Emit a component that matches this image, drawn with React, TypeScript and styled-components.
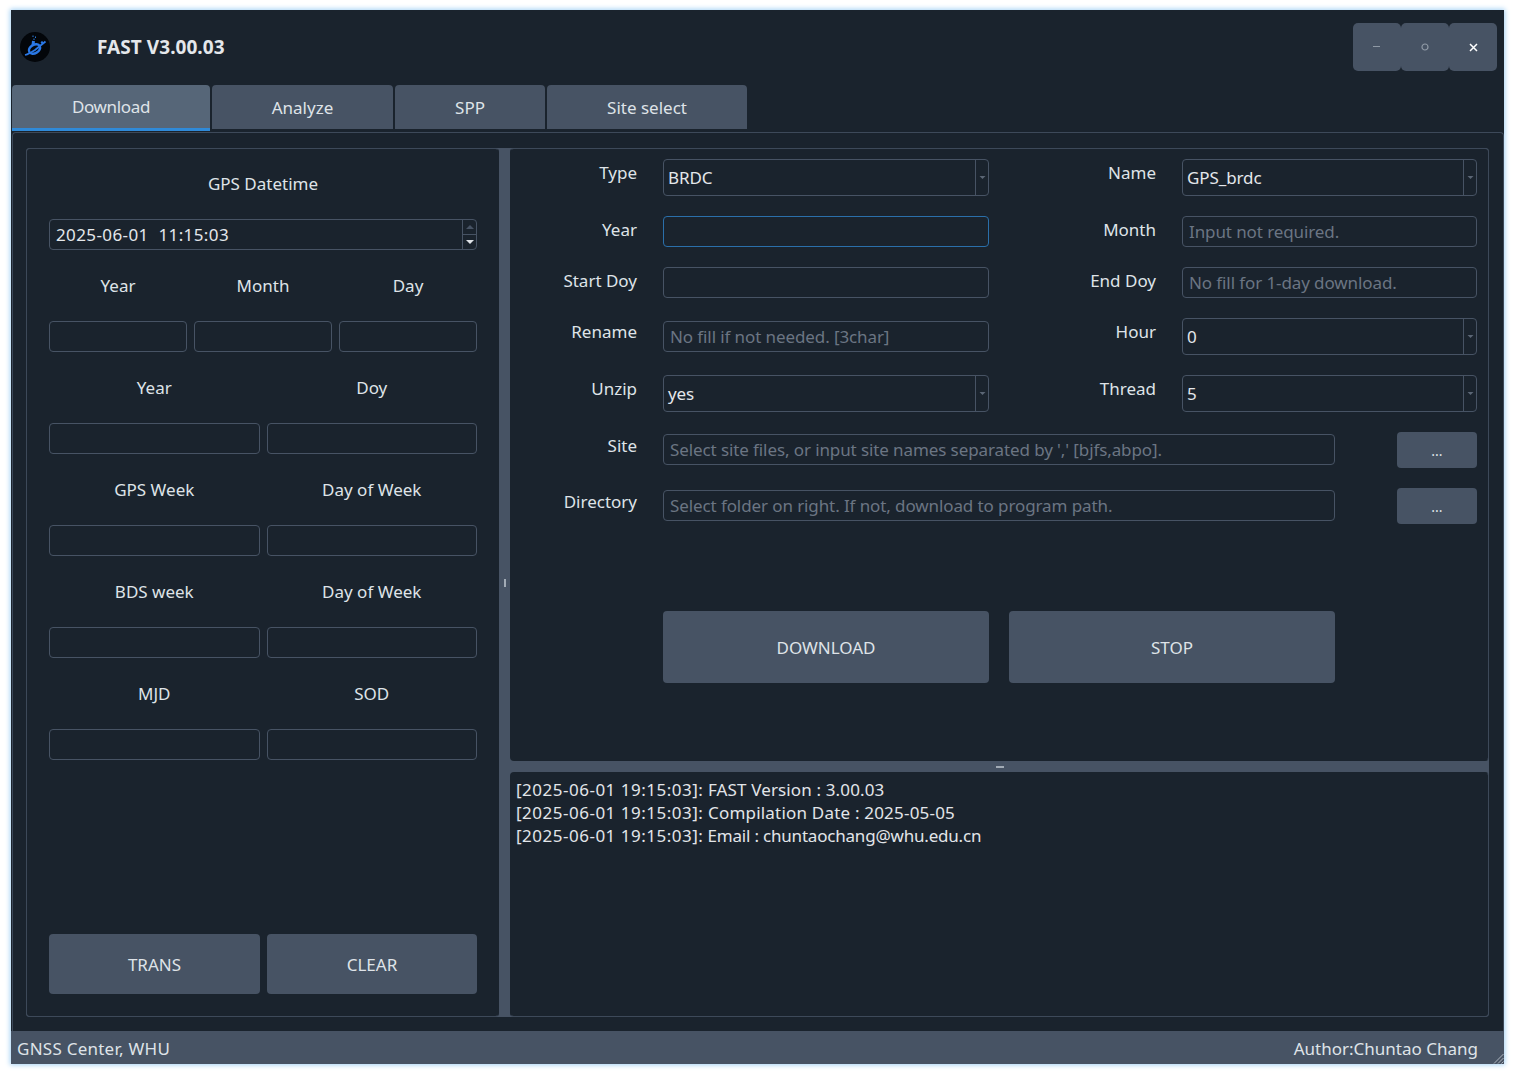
import styled, { createGlobalStyle } from "styled-components";

const GlobalStyle = createGlobalStyle`
  html, body { margin: 0; padding: 0; background: #ffffff; }
  body { font-family: "Noto Sans", "Open Sans", sans-serif; }
  * { box-sizing: border-box; }
`;

const Page = styled.div`
  width: 1514px;
  height: 1074px;
  padding: 10px 10px 10px 11px;
`;

const Window = styled.div`
  width: 1493px;
  height: 1054px;
  display: flex;
  flex-direction: column;
  background: #1a232d;
  color: #dfe3e8;
  font-size: 17px;
  box-shadow: 0 0 5px 1px #a5d2f5;
`;

const TitleBar = styled.header`
  height: 75px;
  flex: none;
  display: flex;
  align-items: center;
  padding: 0 7px 1px 9px;
`;

const Title = styled.h1`
  margin: 0 0 0 47px;
  font-size: 19px;
  font-weight: 700;
  letter-spacing: 0.05px;
  color: #e4e7eb;
  flex: 1;
`;

const WindowButtons = styled.div`
  display: flex;
`;

const WindowButton = styled.button<{ $bright?: boolean }>`
  width: 48px;
  height: 48px;
  padding: 0;
  border: 0;
  border-radius: 5px;
  background: #475364;
  display: flex;
  align-items: center;
  justify-content: center;
  color: ${(p) => (p.$bright ? "#ffffff" : "#8f99a5")};
`;

const TabBar = styled.nav`
  height: 47px;
  flex: none;
  display: flex;
  gap: 2px;
  padding-left: 1px;
`;

const Tab = styled.div<{ $active?: boolean; $w: number }>`
  width: ${(p) => p.$w}px;
  height: ${(p) => (p.$active ? 46 : 44)}px;
  display: flex;
  align-items: center;
  justify-content: center;
  background: ${(p) => (p.$active ? "#566678" : "#475364")};
  border-radius: 4px 4px 0 0;
  border-bottom: ${(p) => (p.$active ? "3px solid #2f8ad8" : "0")};
  font-size: 17px;
  letter-spacing: ${(p) => (p.$active ? "-0.35px" : "0")};
  color: #dfe3e8;
`;

const TabPane = styled.main`
  flex: 1;
  min-height: 0;
  margin-left: 1px;
  padding: 15px 14px 14px 13px;
  border: 1px solid #3d4959;
  border-bottom: 0;
  border-radius: 4px 4px 0 0;
  display: flex;
`;

const Workspace = styled.div`
  flex: 1;
  display: flex;
  background: #475364;
  border-radius: 4px;
  min-width: 0;
`;

const Panel = styled.section`
  background: #1a232d;
  border: 1px solid #3d4959;
  border-radius: 4px;
`;

const LeftPanel = styled(Panel)`
  width: 473px;
  flex: none;
  display: flex;
  flex-direction: column;
  gap: 20px;
  padding: 19px 21px 22px 22px;
  border-right-color: transparent;
`;

const RightColumn = styled.div`
  flex: 1;
  min-width: 0;
  display: flex;
  flex-direction: column;
`;

const FormPanel = styled(Panel)`
  height: 613px;
  flex: none;
  display: flex;
  flex-direction: column;
  gap: 20px;
  padding: 10px 10px 0 0;
  border-left-color: transparent;
  border-bottom-color: transparent;
`;

const LogPanel = styled(Panel)`
  flex: 1;
  padding: 5px 5px;
  font-size: 17px;
  line-height: 23px;
  color: #e2e5e9;
  border-left-color: transparent;
  border-top-color: transparent;
`;

const LogLine = styled.div<{ $tracking: number }>`
  white-space: pre;
  letter-spacing: ${(p) => p.$tracking}px;
`;

const Stamp = styled.span`
  letter-spacing: 0.5px;
`;

const VSplitter = styled.div`
  width: 11px;
  flex: none;
  display: flex;
  align-items: center;
  justify-content: center;
`;

const VGrip = styled.span`
  width: 2px;
  height: 8px;
  background: #a2abb5;
`;

const HSplitter = styled.div`
  height: 11px;
  flex: none;
  display: flex;
  align-items: center;
  justify-content: center;
`;

const HGrip = styled.span`
  width: 8px;
  height: 2px;
  background: #a2abb5;
`;

const Caption = styled.div`
  height: 31px;
  display: flex;
  align-items: center;
  justify-content: center;
  font-size: 17px;
`;

const Columns = styled.div<{ $n: number }>`
  display: grid;
  grid-template-columns: repeat(${(p) => p.$n}, 1fr);
  column-gap: 7px;
`;

const Field = styled.input<{ $focused?: boolean }>`
  width: 100%;
  height: 31px;
  display: block;
  background: transparent;
  border: 1px solid ${(p) => (p.$focused ? "#2a6faa" : "#475364")};
  border-radius: 4px;
  padding: 0 6px;
  font: inherit;
  font-size: 17px;
  letter-spacing: -0.1px;
  color: #e4e7eb;
  outline: none;
  &::placeholder { color: #6b7583; opacity: 1; }
`;

const SpinBox = styled.div`
  height: 31px;
  display: flex;
  border: 1px solid #475364;
  border-radius: 4px;
`;

const SpinValue = styled.div`
  flex: 1;
  display: flex;
  align-items: center;
  padding-left: 6px;
  font-size: 17px;
  letter-spacing: 0.4px;
  white-space: pre;
  color: #e4e7eb;
`;

const SpinArrows = styled.div`
  width: 14px;
  flex: none;
  display: flex;
  flex-direction: column;
  border-left: 1px solid #475364;
`;

const SpinArrow = styled.span<{ $down?: boolean }>`
  flex: 1;
  display: flex;
  align-items: center;
  justify-content: center;
  color: ${(p) => (p.$down ? "#dfe3e8" : "#475364")};
  & + & { border-top: 1px solid #475364; }
`;

const Combo = styled.div`
  height: 37px;
  display: flex;
  border: 1px solid #475364;
  border-radius: 4px;
`;

const ComboValue = styled.div`
  flex: 1;
  display: flex;
  align-items: center;
  padding-left: 4px;
  font-size: 17px;
  letter-spacing: -0.1px;
  color: #e4e7eb;
`;

const ComboArrow = styled.div`
  width: 13px;
  flex: none;
  display: flex;
  align-items: center;
  justify-content: center;
  border-left: 1px solid #475364;
  color: #5b6675;
`;

const FormRow = styled.div`
  display: grid;
  grid-template-columns: 126px 352px 167px 321px;
  align-items: center;
`;

const PathRow = styled.div`
  display: grid;
  grid-template-columns: 126px 760px 80px;
  align-items: center;
`;

const Label = styled.label<{ $lift?: number }>`
  font-size: 17px;
  text-align: right;
  margin-bottom: ${(p) => p.$lift ?? 0}px;
  color: #dfe3e8;
`;

const Control = styled.div`
  margin-left: 26px;
`;

const WideControl = styled(Control)`
  width: 672px;
  margin-bottom: 1px;
`;

const SmallButton = styled.button`
  width: 80px;
  height: 36px;
  border: 0;
  border-radius: 4px;
  background: #475364;
  color: #dfe3e8;
  font: inherit;
  font-size: 14px;
`;

const ActionRow = styled.div`
  display: flex;
  gap: 20px;
  margin: 67px 0 0 152px;
`;

const ActionButton = styled.button<{ $h: number; $w: number }>`
  width: ${(p) => p.$w}px;
  height: ${(p) => p.$h}px;
  border: 0;
  border-radius: 4px;
  background: #475364;
  color: #dfe3e8;
  font: inherit;
  font-size: 17px;
`;

const LeftActions = styled.div`
  margin-top: auto;
  display: flex;
  gap: 7px;
`;

const StatusBar = styled.footer`
  height: 33px;
  flex: none;
  background: #475364;
  display: flex;
  align-items: center;
  justify-content: space-between;
  padding: 2px 26px 0 6px;
  font-size: 17px;
  color: #dfe3e8;
  position: relative;
`;

const StatusLeft = styled.span`
  letter-spacing: 0.25px;
`;

const SizeGrip = styled.svg`
  position: absolute;
  right: 0;
  bottom: 0;
`;

const Logo = () => (
  <svg width="30" height="30" viewBox="0 0 30 30">
    <circle cx="15" cy="15" r="15" fill="#03060a" />
    <ellipse cx="14.5" cy="17" rx="6" ry="4.2" fill="none" stroke="#2a78e6" strokeWidth="2.4" transform="rotate(-30 14.5 17)" />
    <path d="M5 23 C9 22 12 20 15 18 L25.5 9.5" stroke="#2a78e6" strokeWidth="1.8" fill="none" />
    <path d="M13 13 L13.5 9" stroke="#2a78e6" strokeWidth="3" fill="none" />
    <path d="M14 8 L14 6.5 M13 5 L13 3.5 M15.5 6 L15.5 4.5" stroke="#2f7fe0" strokeWidth="1" fill="none" />
    <circle cx="22" cy="10.5" r="1.2" fill="#2a78e6" />
  </svg>
);

const DownTriangle = ({ w = 8, h = 4 }: { w?: number; h?: number }) => (
  <svg width={w} height={h} viewBox="0 0 8 4">
    <path d="M0 0 H8 L4 4 Z" fill="currentColor" />
  </svg>
);

const UpTriangle = () => (
  <svg width="8" height="4" viewBox="0 0 8 4">
    <path d="M0 4 H8 L4 0 Z" fill="currentColor" />
  </svg>
);

const ComboField = ({ value }: { value: string }) => (
  <Combo>
    <ComboValue>{value}</ComboValue>
    <ComboArrow>
      <DownTriangle w={7} h={3} />
    </ComboArrow>
  </Combo>
);

const leftGroups = [
  { labels: ["Year", "Month", "Day"] },
  { labels: ["Year", "Doy"] },
  { labels: ["GPS Week", "Day of Week"] },
  { labels: ["BDS week", "Day of Week"] },
  { labels: ["MJD", "SOD"] },
];

const stamp = "[2025-06-01 19:15:03]:";

const logLines = [
  { text: " FAST Version : 3.00.03", tracking: 0.14 },
  { text: " Compilation Date : 2025-05-05", tracking: 0.2 },
  { text: " Email : chuntaochang@whu.edu.cn", tracking: -0.2 },
];

function Group({ labels }: { labels: string[] }) {
  return (
    <>
      <Columns $n={labels.length}>
        {labels.map((label, i) => (
          <Caption key={i}>{label}</Caption>
        ))}
      </Columns>
      <Columns $n={labels.length}>
        {labels.map((_, i) => (
          <Field key={i} readOnly />
        ))}
      </Columns>
    </>
  );
}

const App = () => {
  return (
    <Page>
      <GlobalStyle />
      <Window>
        <TitleBar>
          <Logo />
          <Title>FAST V3.00.03</Title>
          <WindowButtons>
            <WindowButton aria-label="minimize">
              <svg width="8" height="2" viewBox="0 0 8 2"><rect width="7" height="1" fill="currentColor" /></svg>
            </WindowButton>
            <WindowButton aria-label="maximize">
              <svg width="8" height="8" viewBox="0 0 8 8"><circle cx="4" cy="4" r="3" fill="none" stroke="currentColor" strokeWidth="1.2" /></svg>
            </WindowButton>
            <WindowButton aria-label="close" $bright>
              <svg width="9" height="9" viewBox="0 0 9 9"><path d="M1 1 L8 8 M8 1 L1 8" stroke="currentColor" strokeWidth="1.5" /></svg>
            </WindowButton>
          </WindowButtons>
        </TitleBar>

        <TabBar>
          <Tab $active $w={198}>Download</Tab>
          <Tab $w={181}>Analyze</Tab>
          <Tab $w={150}>SPP</Tab>
          <Tab $w={200}>Site select</Tab>
        </TabBar>

        <TabPane>
          <Workspace>
            <LeftPanel>
              <Caption>GPS Datetime</Caption>
              <SpinBox>
                <SpinValue>2025-06-01  11:15:03</SpinValue>
                <SpinArrows>
                  <SpinArrow><UpTriangle /></SpinArrow>
                  <SpinArrow $down><DownTriangle /></SpinArrow>
                </SpinArrows>
              </SpinBox>
              {leftGroups.map((group, i) => (
                <Group key={i} labels={group.labels} />
              ))}
              <LeftActions>
                <ActionButton $w={211} $h={60}>TRANS</ActionButton>
                <ActionButton $w={210} $h={60}>CLEAR</ActionButton>
              </LeftActions>
            </LeftPanel>

            <VSplitter><VGrip /></VSplitter>

            <RightColumn>
              <FormPanel>
                <FormRow>
                  <Label $lift={11}>Type</Label>
                  <Control><ComboField value="BRDC" /></Control>
                  <Label $lift={11}>Name</Label>
                  <Control><ComboField value="GPS_brdc" /></Control>
                </FormRow>
                <FormRow>
                  <Label $lift={5}>Year</Label>
                  <Control><Field $focused readOnly /></Control>
                  <Label $lift={5}>Month</Label>
                  <Control><Field placeholder="Input not required." readOnly /></Control>
                </FormRow>
                <FormRow>
                  <Label $lift={5}>Start Doy</Label>
                  <Control><Field readOnly /></Control>
                  <Label $lift={5}>End Doy</Label>
                  <Control><Field placeholder="No fill for 1-day download." readOnly /></Control>
                </FormRow>
                <FormRow>
                  <Label $lift={11}>Rename</Label>
                  <Control><Field placeholder="No fill if not needed. [3char]" readOnly /></Control>
                  <Label $lift={11}>Hour</Label>
                  <Control><ComboField value="0" /></Control>
                </FormRow>
                <FormRow>
                  <Label $lift={11}>Unzip</Label>
                  <Control><ComboField value="yes" /></Control>
                  <Label $lift={11}>Thread</Label>
                  <Control><ComboField value="5" /></Control>
                </FormRow>
                <PathRow>
                  <Label $lift={9}>Site</Label>
                  <WideControl><Field placeholder="Select site files, or input site names separated by ',' [bjfs,abpo]." readOnly /></WideControl>
                  <SmallButton>...</SmallButton>
                </PathRow>
                <PathRow>
                  <Label $lift={9}>Directory</Label>
                  <WideControl><Field placeholder="Select folder on right. If not, download to program path." readOnly /></WideControl>
                  <SmallButton>...</SmallButton>
                </PathRow>
                <ActionRow>
                  <ActionButton $w={326} $h={72}>DOWNLOAD</ActionButton>
                  <ActionButton $w={326} $h={72}>STOP</ActionButton>
                </ActionRow>
              </FormPanel>

              <HSplitter><HGrip /></HSplitter>

              <LogPanel>
                {logLines.map((line) => (
                  <LogLine key={line.text} $tracking={line.tracking}>
                    <Stamp>{stamp}</Stamp>
                    {line.text}
                  </LogLine>
                ))}
              </LogPanel>
            </RightColumn>
          </Workspace>
        </TabPane>

        <StatusBar>
          <StatusLeft>GNSS Center, WHU</StatusLeft>
          <span>Author:Chuntao Chang</span>
          <SizeGrip width="12" height="12" viewBox="0 0 12 12">
            <path d="M11.5 2 L2 11.5 M11.5 6 L6 11.5 M11.5 9.5 L9.5 11.5" stroke="#aeb6bf" strokeWidth="1" fill="none" />
          </SizeGrip>
        </StatusBar>
      </Window>
    </Page>
  );
};

export default App;
